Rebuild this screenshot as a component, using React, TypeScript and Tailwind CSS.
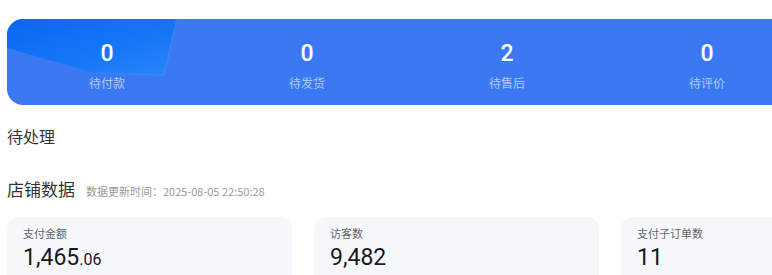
import React from 'react';

const tabs = [
  { label: '待付款', count: 0 },
  { label: '待发货', count: 0 },
  { label: '待售后', count: 2 },
  { label: '待评价', count: 0 },
];

const stats = [
  { label: '支付金额', value: '1,465', decimal: '.06' },
  { label: '访客数', value: '9,482' },
  { label: '支付子订单数', value: '11' },
];

const cjk = { fontFamily: '"Noto Sans CJK SC", "Noto Sans", sans-serif' };
const num = { fontFamily: 'Roboto, "Noto Sans", sans-serif' };

export default function App() {
  return (
    <div className="w-full h-[275px] overflow-hidden bg-white pl-[7px] pt-[19px]" style={cjk}>
      {/* order status bar */}
      <div className="relative w-[800px] h-[86px] rounded-l-[16px] bg-[#3b79f2] overflow-hidden flex">
        <svg className="absolute left-0 top-0" width="180" height="60" viewBox="0 0 180 60">
          <defs>
            <linearGradient id="hl" x1="0" y1="0" x2="1" y2="1">
              <stop offset="0" stopColor="#0b67f4" />
              <stop offset="0.6" stopColor="#1677f6" />
              <stop offset="1" stopColor="#2a86f8" />
            </linearGradient>
          </defs>
          <polygon points="0,0 170,0 157,56 88,54 0,29" fill="url(#hl)" />
          <polyline points="170,0 157,56 88,54" fill="none" stroke="#3a8cfa" strokeWidth="1.5" opacity="0.7" />
        </svg>
        {tabs.map((t) => (
          <div key={t.label} className="relative flex-1 flex flex-col items-center pt-[22px]">
            <span className="text-[23px] leading-[26px] font-medium text-white" style={num}>
              {t.count}
            </span>
            <span className="mt-[8px] text-[12px] leading-[16px] text-white/60">{t.label}</span>
          </div>
        ))}
      </div>

      <div className="mt-[20px] text-[16px] leading-[22px] text-[#333]">待处理</div>

      <div className="mt-[30px] flex items-baseline">
        <span className="text-[17px] leading-[24px] text-[#333]">店铺数据</span>
        <span className="ml-[11px] text-[11px] text-[#999]">数据更新时间：2025-08-05 22:50:28</span>
      </div>

      <div className="mt-[16px] flex gap-[22px]">
        {stats.map((s) => (
          <div key={s.label} className="w-[285px] shrink-0 h-[80px] rounded-[12px] bg-[#f5f7fa] px-4 pt-[8px]">
            <div className="text-[11px] leading-[16px] text-[#666]">{s.label}</div>
            <div className="mt-[3px] text-[#1a1a1a]" style={num}>
              <span className="text-[23px] leading-[28px]">{s.value}</span>
              {s.decimal && <span className="text-[16px]">{s.decimal}</span>}
            </div>
          </div>
        ))}
      </div>
    </div>
  );
}
